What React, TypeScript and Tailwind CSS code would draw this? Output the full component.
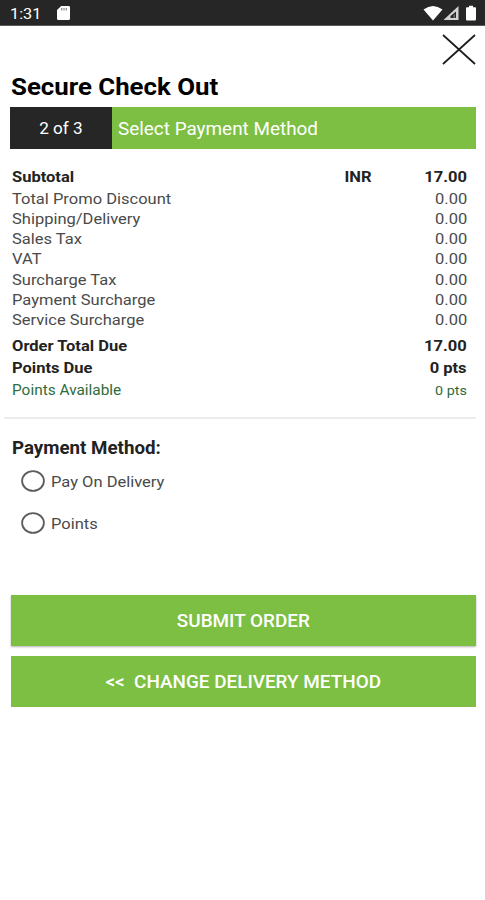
import React from 'react';

const charges = [
  'Total Promo Discount',
  'Shipping/Delivery',
  'Sales Tax',
  'VAT',
  'Surcharge Tax',
  'Payment Surcharge',
  'Service Surcharge',
];

const methods = ['Pay On Delivery', 'Points'];

const StatusBar: React.FC = () => (
  <div className="flex h-[26px] items-center justify-between border-b border-[#5a5a5a] bg-[#262626] pl-[10px] pr-[7px] text-white">
    <div className="flex items-center pt-[2px]">
      <span className="w-[46px] text-[15.5px] leading-5">
        <span className="inline-block origin-left scale-x-[1.05]">1:31</span>
      </span>
      <svg className="-mt-[1px] h-[14px] w-[15px]" viewBox="0 0 15 14">
        <path d="M5.2 0H12.6Q14 0 14 1.3V12.7Q14 14 12.6 14H2.4Q1 14 1 12.7V4Z" fill="#fff" />
        <path d="M5.7 2v2.4M8 2v2.4M10.3 2v2.4" stroke="#8a8a8a" strokeWidth="1.2" />
      </svg>
    </div>
    <svg className="mt-[1px] h-[16px] w-[55px]" viewBox="0 0 55 16">
      <path d="M0.5 4.5Q10 -2.5 19.5 4.5L10 15.5Z" fill="#fff" />
      <path d="M35.5 1V15H20.5Z" fill="#d2d2d2" />
      <path d="M33 6.5V13H27.5V11Z" fill="#262626" />
      <path d="M31.2 9.5V13" stroke="#8a8a8a" strokeWidth="1.1" />
      <path d="M46 0.8H50V2.3H52.3Q53 2.3 53 3.2V14.5Q53 15.5 52 15.5H44Q43 15.5 43 14.5V3.2Q43 2.3 43.8 2.3H46Z" fill="#fff" />
    </svg>
  </div>
);

interface RowProps {
  label: string;
  value: string;
  currency?: string;
  className: string;
  valueClassName?: string;
}

const Row: React.FC<RowProps> = ({ label, value, currency, className, valueClassName = '' }) => (
  <div className={`flex items-center ${className}`}>
    <span className="origin-left scale-x-[1.1]">{label}</span>
    {currency && <span className="ml-auto origin-right scale-x-[1.1]">{currency}</span>}
    <span className={`origin-right scale-x-[1.1] text-right ${currency ? 'w-[95px]' : 'ml-auto'} ${valueClassName}`}>
      {value}
    </span>
  </div>
);

const App: React.FC = () => {
  return (
    <div className="h-[900px] w-[485px] overflow-hidden bg-white font-['Roboto',sans-serif] text-[#222]">
      <StatusBar />

      {/* Close */}
      <div className="flex h-[44px] justify-end pr-[9.5px] pt-[8px]">
        <svg className="h-[31px] w-[34px]" viewBox="0 0 34 31" fill="none" stroke="#1c1c1c" strokeWidth="1.7">
          <path d="M1 1L33 30M33 1L1 30" />
        </svg>
      </div>

      <h1 className="h-[37px] pl-[11px] text-[24px] font-bold leading-[35px] text-black">
        <span className="inline-block origin-left scale-x-[1.075]">Secure Check Out</span>
      </h1>

      {/* Step */}
      <div className="ml-[10px] mr-[9px] flex h-[42px] items-center bg-[#7cbf42] text-[18px] text-white">
        <div className="flex h-full w-[102px] items-center justify-center bg-[#262626]">
          <span className="scale-x-[1.04] pt-[2px] text-[16.5px]">2 of 3</span>
        </div>
        <span className="ml-[6px] origin-left scale-x-[1.05]">Select Payment Method</span>
      </div>

      {/* Totals */}
      <div className="pl-[11.5px] pr-[18px] pt-[17px] text-[15px] text-[#4a4a4a]">
        <Row label="Subtotal" value="17.00" currency="INR" className="h-[23px] font-bold text-[#222]" />
        <div>
          {charges.map((label) => (
            <Row key={label} label={label} value="0.00" className="h-[20.2px]" />
          ))}
        </div>
        <div className="pt-[5px]">
          <Row label="Order Total Due" value="17.00" className="h-[22px] font-bold text-[#222]" />
          <Row label="Points Due" value="0 pts" className="h-[22px] font-bold text-[#222]" />
          <Row
            label="Points Available"
            value="0 pts"
            className="h-[22px] text-[14px] text-[#2f6b3c]"
            valueClassName="text-[13px]"
          />
        </div>
      </div>

      <div className="ml-[4px] mr-[9px] mt-[15.6px] h-[2px] bg-[#ececec]" />

      {/* Payment method */}
      <div className="h-[176px] pl-[11.5px] pt-[17px]">
        <h2 className="h-[24px] text-[17.5px] font-bold leading-[24px]">
          <span className="inline-block origin-left scale-x-[1.07]">Payment Method:</span>
        </h2>
        {methods.map((method) => (
          <div key={method} className="flex h-[42px] items-center pl-[9px] text-[15px] text-[#4a4a4a]">
            <svg className="h-[22px] w-[24px]" viewBox="0 0 24 22" fill="none" stroke="#5c5c5c" strokeWidth="1.8">
              <ellipse cx="12" cy="11" rx="10.9" ry="9.9" />
            </svg>
            <span className="ml-[6.5px] origin-left scale-x-[1.1] pt-[3px]">{method}</span>
          </div>
        ))}
      </div>

      {/* Actions */}
      <div className="ml-[11px] mr-[9px] flex flex-col gap-[10px] text-[18px] font-medium text-white">
        <button className="h-[51px] bg-[#7cbf42] shadow-[0_1px_2px_rgba(0,0,0,0.3)]">
          <span className="inline-block scale-x-[1.05]">SUBMIT ORDER</span>
        </button>
        <button className="h-[51px] bg-[#7cbf42]">
          <span className="inline-block scale-x-[1.05] whitespace-pre">{'<<  CHANGE DELIVERY METHOD'}</span>
        </button>
      </div>
    </div>
  );
};

export default App;
